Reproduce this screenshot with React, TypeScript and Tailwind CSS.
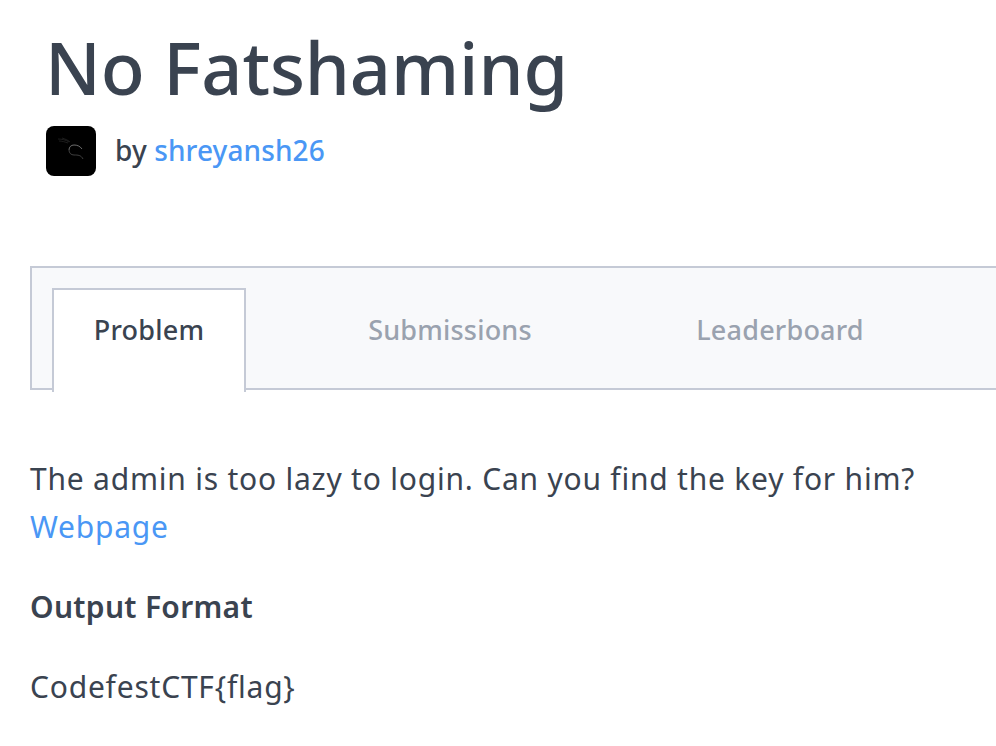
function KaliMark() {
  return (
    <svg width="50" height="50" viewBox="0 0 50 50" fill="none">
      <path d="M23 24c0-3 2-5 5-5 3 0 6 1 8 4" stroke="#8a8a8a" strokeWidth="0.8" />
      <path d="M23 24c0 3 2 5 5 5 4 0 7 0 9 4" stroke="#5a5a5a" strokeWidth="0.7" />
      <path d="M12 13c4 0 8 1 11 3M13 15c3 0 6 1 9 2M16 12c3 1 6 2 8 4" stroke="#3a3a3a" strokeWidth="0.5" />
    </svg>
  );
}

export default function App() {
  return (
    <div className="min-h-[746px] bg-white font-['Noto_Sans','Open_Sans',sans-serif] text-[#3a4350] overflow-hidden">
      <div className="pl-[46px]">
        <h1 className="text-[72px] leading-[98px] font-medium h-[118px] pt-[18px] -ml-[1px] tracking-[-0.08px]">No Fatshaming</h1>
        <div className="flex items-center gap-5 mt-[8px] h-[50px]">
          <div className="w-[50px] h-[50px] rounded-lg bg-black overflow-hidden">
            <KaliMark />
          </div>
          <div className="text-[28px] font-medium -ml-[1px] -mt-[2px] tracking-[0.1px]">
            by <a className="text-[#4a97f5]">shreyansh26</a>
          </div>
        </div>
      </div>

      <div className="ml-[30px] mt-[90px] h-[124px] border-2 border-r-0 border-[#c5cad6] bg-[#f8f9fb] flex pl-5 pt-5">
        <div className="w-[194px] h-[104px] border-2 border-[#c5cad6] border-b-0 bg-white text-[27px] font-medium flex justify-center pt-[18px] leading-[44px] tracking-[0.2px] text-[#3a4350]">
          Problem
        </div>
        <div className="w-[330px] ml-[39px] flex justify-center pt-[20px] text-[27px] font-medium leading-[44px] tracking-[0.2px] text-[#9aa2af]">Submissions</div>
        <div className="w-[330px] flex justify-center pt-[20px] text-[27px] font-medium leading-[44px] tracking-[0.2px] text-[#9aa2af]">Leaderboard</div>
      </div>

      <div className="ml-[30px] mt-[65px] text-[30px] leading-[48px] tracking-[0.78px]">
        <p>The admin is too lazy to login. Can you find the key for him?</p>
        <a className="text-[#4a97f5]">Webpage</a>
        <h2 className="font-semibold text-[30px] mt-[32px] tracking-[0.3px]">Output Format</h2>
        <p className="mt-[32px]">CodefestCTF{'{flag}'}</p>
      </div>
    </div>
  );
}
